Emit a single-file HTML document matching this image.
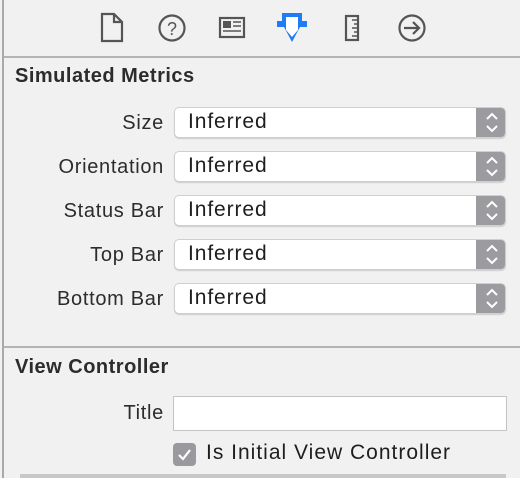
<!DOCTYPE html>
<html><head><style>
body{margin:0;width:520px;height:478px;background:#f1f1f1;position:relative;overflow:hidden;font-family:"Liberation Sans",sans-serif;color:#2c2c2c}
.a{position:absolute}
.vl{left:2px;top:0;width:2px;height:478px;background:#a9a9a9}
.hl{left:4px;height:2px;width:516px;background:#b4b4b4}
.h{font-weight:bold;font-size:20px;letter-spacing:.5px;left:15px}
.lab{font-size:20px;letter-spacing:.7px;right:356px;text-align:right}
.pop{left:174px;width:332px;height:31px;background:#fff;border:1px solid #cfcfcf;border-radius:5px;box-sizing:border-box;box-shadow:0 1px 1px rgba(0,0,0,.15);overflow:hidden}
.pop span{position:absolute;left:13px;top:2px;font-size:21px;letter-spacing:.9px;color:#1e1e1e}
.st{position:absolute;right:0;top:0;width:29px;height:100%;background:#9c9b9f}
</style></head><body>
<div class="a vl"></div>
<div class="a hl" style="top:56px"></div>
<div class="a hl" style="top:346px"></div>
<div class="a" style="left:20px;top:474px;width:486px;height:4px;background:#c8c8c8"></div>
<svg class="a" style="left:0;top:0" width="520" height="56" fill="none" stroke="#555" stroke-width="2.2">
<path d="M102 14h12l8 8v19h-20z M114 14v8h8"/>
<circle cx="172" cy="28" r="12.5"/>
<text x="172" y="35" font-size="18" font-family="Liberation Sans" text-anchor="middle" fill="#555" stroke="none">?</text>
<rect x="220" y="18" width="24" height="19"/>
<rect x="223" y="21" width="8" height="7" fill="#555" stroke="none"/>
<path d="M233 22h8M233 26h8M223 31h18" stroke-width="1.6"/>
<path d="M282 13H302V21H307V27H300L292 42L284 27H277V21H282Z" fill="#1f7cf5" stroke="none"/>
<path d="M286 17H298V30L292 37L286 30Z" fill="#fff" stroke="none"/>
<rect x="346" y="16" width="12" height="24"/>
<path d="M352 20h5M354 24h3M352 28h5M354 32h3M352 36h5" stroke-width="1.6"/>
<circle cx="412" cy="28" r="12.5"/>
<path d="M404 28h15M413 22l6 6-6 6"/>
</svg>
<div class="a h" style="top:65px">Simulated Metrics</div>
<div class="a lab" style="top:112px">Size</div>
<div class="a lab" style="top:156px">Orientation</div>
<div class="a lab" style="top:200px">Status Bar</div>
<div class="a lab" style="top:244px">Top Bar</div>
<div class="a lab" style="top:288px">Bottom Bar</div>
<div class="a pop" style="top:107px"><span>Inferred</span><div class="st"></div></div>
<div class="a pop" style="top:151px"><span>Inferred</span><div class="st"></div></div>
<div class="a pop" style="top:195px"><span>Inferred</span><div class="st"></div></div>
<div class="a pop" style="top:239px"><span>Inferred</span><div class="st"></div></div>
<div class="a pop" style="top:283px"><span>Inferred</span><div class="st"></div></div>
<svg class="a" style="left:478px;top:107px" width="28" height="220" fill="none" stroke="#fff" stroke-width="2">
<g id="c"><path d="M9 12l5-5 5 5M9 19l5 5 5-5"/></g>
<use href="#c" y="44"/><use href="#c" y="88"/><use href="#c" y="132"/><use href="#c" y="176"/>
</svg>
<div class="a h" style="top:356px">View Controller</div>
<div class="a lab" style="top:402px">Title</div>
<div class="a" style="left:173px;top:396px;width:334px;height:35px;background:#fff;border:1px solid #c4c4c4;box-sizing:border-box"></div>
<div class="a" style="left:173px;top:443px;width:23px;height:23px;background:#9a999d;border-radius:4px"></div>
<svg class="a" style="left:173px;top:443px" width="23" height="23"><path d="M6 12l4 4 7-9" stroke="#fff" stroke-width="2.2" fill="none"/></svg>
<div class="a" style="left:206px;top:441px;font-size:21px;letter-spacing:1px;color:#1e1e1e">Is Initial View Controller</div>
</body></html>
